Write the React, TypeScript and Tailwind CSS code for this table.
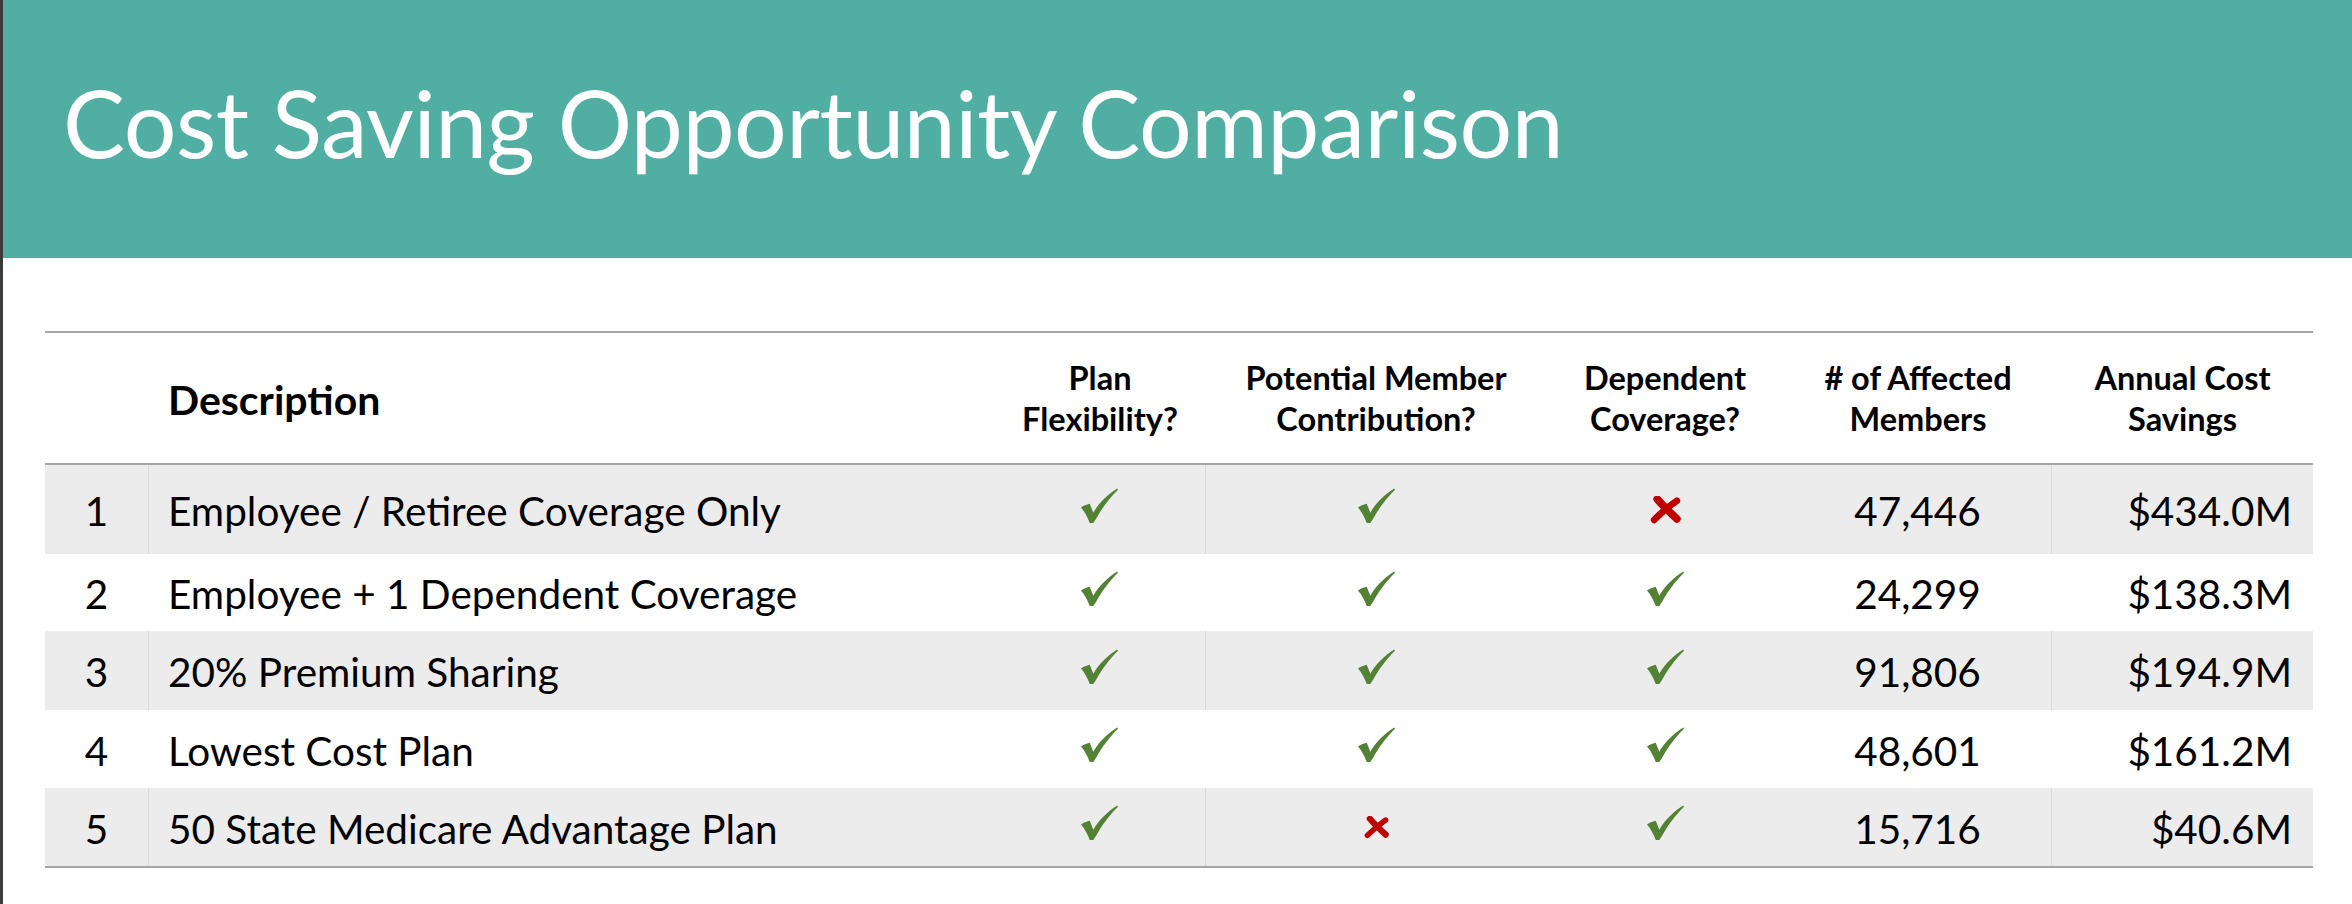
import React from "react";

type Mark = "check" | "x" | "x-sm";

type Row = {
  n: number;
  desc: string;
  flex: Mark;
  contrib: Mark;
  dep: Mark;
  members: string;
  savings: string;
  h: string;
};

const rows: Row[] = [
  { n: 1, desc: "Employee / Retiree Coverage Only", flex: "check", contrib: "check", dep: "x", members: "47,446", savings: "$434.0M", h: "h-[89px]" },
  { n: 2, desc: "Employee + 1 Dependent Coverage", flex: "check", contrib: "check", dep: "check", members: "24,299", savings: "$138.3M", h: "h-[77px]" },
  { n: 3, desc: "20% Premium Sharing", flex: "check", contrib: "check", dep: "check", members: "91,806", savings: "$194.9M", h: "h-[79px]" },
  { n: 4, desc: "Lowest Cost Plan", flex: "check", contrib: "check", dep: "check", members: "48,601", savings: "$161.2M", h: "h-[78px]" },
  { n: 5, desc: "50 State Medicare Advantage Plan", flex: "check", contrib: "x-sm", dep: "check", members: "15,716", savings: "$40.6M", h: "h-[78px]" },
];

function CheckMark() {
  return (
    <svg width="37" height="35" viewBox="0 0 36 34" className="mb-[9px]">
      <path
        d="M0,19 C2.5,17.2 5,16 8.5,15.3 L12,24 C17,15 25,7 35.3,0.4 L36,1.6 C27.5,10 20,20 15,29.5 L12,34 L8.5,34 C6.5,28.5 3.5,23 0,19 Z"
        fill="#548235"
      />
    </svg>
  );
}

function XMark({ small }: { small?: boolean }) {
  const w = small ? 25 : 31;
  const h = small ? 23 : 28;
  return (
    <svg width={w} height={h} viewBox="0 0 30 27">
      <path d="M7,3 Q14,11 26,22" stroke="#c00000" strokeWidth="7.5" strokeLinecap="round" fill="none" />
      <path d="M26,4.5 Q15,12 4,23" stroke="#c00000" strokeWidth="6.5" strokeLinecap="round" fill="none" />
    </svg>
  );
}

function Cell({ mark }: { mark: Mark }) {
  if (mark === "check") return <CheckMark />;
  return <XMark small={mark === "x-sm"} />;
}

export default function App() {
  const cols = "grid grid-cols-[104px_845px_212px_340px_238px_268px_261px]";
  return (
    <div className="min-h-[904px] w-full bg-white border-l-[3px] border-[#3b3b3b] font-['Lato',sans-serif] text-black">
      <header className="h-[258px] bg-[#50afa2] flex items-center pl-[60px] pb-[14px]">
        <h1 className="text-[93px] font-normal text-white leading-none tracking-[-0.5px]">
          Cost Saving Opportunity Comparison
        </h1>
      </header>

      <div className="ml-[42px] mt-[73px] w-[2268px] border-t-2 border-b-2 border-[#a6a6a6]">
        <div className={`${cols} h-[132px] items-center border-b-2 border-[#a6a6a6] font-bold`}>
          <div />
          <div className="pl-[19px] pt-[3px] text-[41px]">Description</div>
          <div className="text-center text-[32.5px] leading-[41px]">
            Plan
            <br />
            Flexibility?
          </div>
          <div className="text-center text-[32.5px] leading-[41px]">
            Potential Member
            <br />
            Contribution?
          </div>
          <div className="text-center text-[32.5px] leading-[41px]">
            Dependent
            <br />
            Coverage?
          </div>
          <div className="text-center text-[32.5px] leading-[41px]">
            # of Affected
            <br />
            Members
          </div>
          <div className="text-center text-[32.5px] leading-[41px]">
            Annual Cost
            <br />
            Savings
          </div>
        </div>

        {rows.map((r) => {
          const shaded = r.n % 2 === 1;
          const line = shaded ? "border-r border-[#d9d9d9]" : "border-r border-transparent";
          return (
            <div
              key={r.n}
              className={`${cols} ${r.h} text-[40.5px] ${shaded ? "bg-[#ececec]" : "bg-white"}`}
            >
              <div className={`flex items-center justify-center pt-[4px] ${line}`}>{r.n}</div>
              <div className="flex items-center pl-[19px] pt-[4px]">{r.desc}</div>
              <div className={`flex items-center justify-center ${line}`}>
                <Cell mark={r.flex} />
              </div>
              <div className="flex items-center justify-center">
                <Cell mark={r.contrib} />
              </div>
              <div className="flex items-center justify-center">
                <Cell mark={r.dep} />
              </div>
              <div className={`flex items-center justify-center pt-[4px] ${line}`}>{r.members}</div>
              <div className="flex items-center justify-end pr-[21px] pt-[4px]">{r.savings}</div>
            </div>
          );
        })}
      </div>
    </div>
  );
}
